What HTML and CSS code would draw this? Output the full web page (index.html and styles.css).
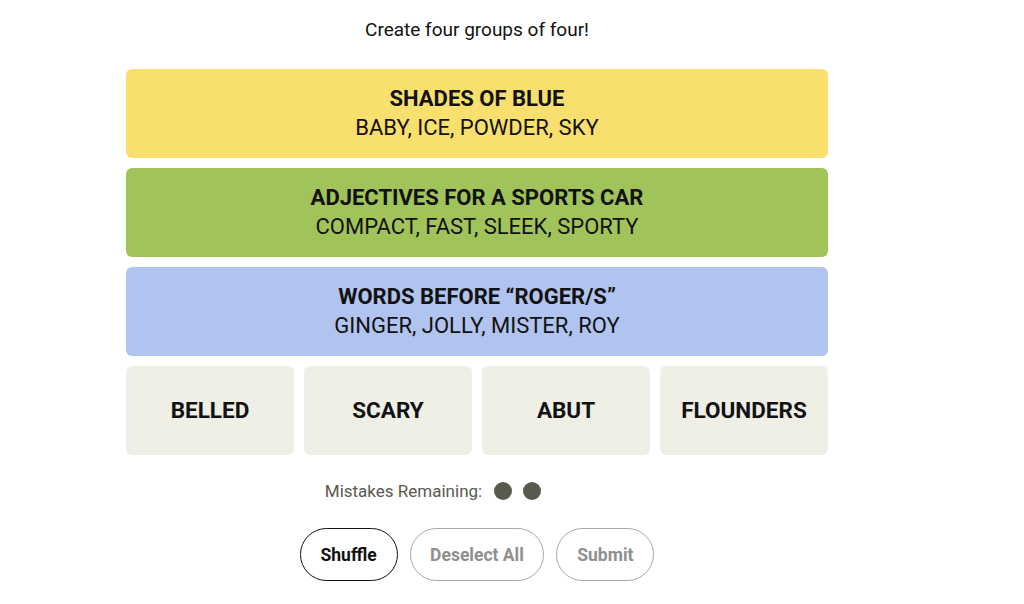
FILE: index.html
```html
<!DOCTYPE html>
<html lang="en">
<head>
    <meta charset="UTF-8">
    <meta name="viewport" content="width=device-width, initial-scale=1.0">
    <title>Connections</title>
    <link rel="stylesheet" href="styles.css">
</head>
<body>
    <div class="game">
        <p class="intro">Create four groups of four!</p>
        <div class="board">
            <div class="solved yellow">
                <div class="solved-title">SHADES OF BLUE</div>
                <div class="solved-words">BABY, ICE, POWDER, SKY</div>
            </div>
            <div class="solved green">
                <div class="solved-title">ADJECTIVES FOR A SPORTS CAR</div>
                <div class="solved-words">COMPACT, FAST, SLEEK, SPORTY</div>
            </div>
            <div class="solved blue">
                <div class="solved-title">WORDS BEFORE “ROGER/S”</div>
                <div class="solved-words">GINGER, JOLLY, MISTER, ROY</div>
            </div>
            <div class="tiles">
                <div class="tile">BELLED</div>
                <div class="tile">SCARY</div>
                <div class="tile">ABUT</div>
                <div class="tile">FLOUNDERS</div>
            </div>
        </div>
        <div class="mistakes">
            <span>Mistakes Remaining:</span>
            <span class="dot"></span>
            <span class="dot"></span>
        </div>
        <div class="actions">
            <button class="btn">Shuffle</button>
            <button class="btn disabled">Deselect All</button>
            <button class="btn disabled">Submit</button>
        </div>
    </div>
</body>
</html>
```

FILE: styles.css
```css
body {
    margin: 0;
    font-family: Roboto, "Liberation Sans", sans-serif;
    color: #121212;
    background: #fff;
}
.game {
    width: 702px;
    margin-left: 126px;
    display: flex;
    flex-direction: column;
    align-items: center;
}
.intro {
    margin: 18px 0 0;
    height: 51px;
    font-size: 19px;
    line-height: 24px;
}
.board {
    width: 100%;
    display: flex;
    flex-direction: column;
    gap: 10px;
}
.solved {
    height: 89px;
    border-radius: 6px;
    display: flex;
    flex-direction: column;
    justify-content: center;
    align-items: center;
    font-size: 22px;
    line-height: 29px;
}
.solved-title {
    font-weight: bold;
    margin-top: -2px;
}
.yellow {
    background: #f9df6d;
}
.green {
    background: #a0c35a;
}
.blue {
    background: #b0c4ef;
}
.tiles {
    display: grid;
    grid-template-columns: repeat(4, 1fr);
    gap: 10px;
}
.tile {
    height: 89px;
    border-radius: 6px;
    background: #efefe6;
    display: flex;
    justify-content: center;
    align-items: center;
    font-size: 22.5px;
    font-weight: bold;
    padding-bottom: 2px;
    box-sizing: border-box;
}
/* the row sits left of centre: room is kept for the spent dots */
.mistakes {
    margin-top: 26px;
    margin-right: 88px;
    height: 20px;
    display: flex;
    align-items: center;
    gap: 11px;
    font-size: 17px;
    color: #5a594e;
}
.mistakes span:first-child {
    margin-right: 1px;
}
.dot {
    width: 18px;
    height: 18px;
    border-radius: 50%;
    background: #5a594e;
}
.actions {
    margin-top: 27px;
    display: flex;
    gap: 12px;
}
.btn {
    height: 53px;
    padding: 0 19.5px;
    min-width: 98px;
    border: 1px solid #121212;
    border-radius: 27px;
    background: #fff;
    color: #121212;
    font-family: inherit;
    font-size: 17.5px;
    font-weight: bold;
}
.btn.disabled {
    border-color: #a8a8a8;
    color: #8f8f8f;
}
```
